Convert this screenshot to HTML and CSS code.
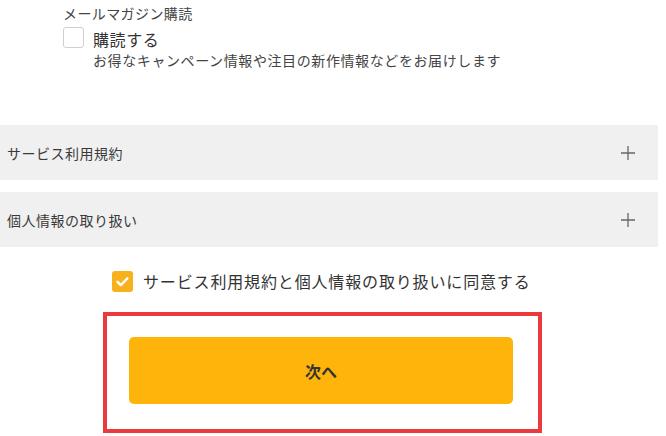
FILE: index.html
```html
<!DOCTYPE html>
<html lang="ja">
<head>
<meta charset="utf-8">
<link rel="stylesheet" href="styles.css">
</head>
<body>
<div class="page">
  <section class="mail">
    <div class="mail-title">メールマガジン購読</div>
    <div class="opt">
      <span class="box"></span>
      <div class="opt-text">
        <div class="opt-label">購読する</div>
        <div class="opt-sub">お得なキャンペーン情報や注目の新作情報などをお届けします</div>
      </div>
    </div>
  </section>

  <div class="panels">
    <div class="panel">
      <span class="panel-title">サービス利用規約</span>
      <svg class="plus" width="16" height="16" viewBox="0 0 16 16"><path d="M8 1v14M1 8h14" stroke="#666" stroke-width="1.3" fill="none"/></svg>
    </div>
    <div class="panel">
      <span class="panel-title">個人情報の取り扱い</span>
      <svg class="plus" width="16" height="16" viewBox="0 0 16 16"><path d="M8 1v14M1 8h14" stroke="#666" stroke-width="1.3" fill="none"/></svg>
    </div>
  </div>

  <div class="agree">
    <span class="box checked">
      <svg width="21" height="21" viewBox="0 0 21 21"><path d="M5.5 10.8l3.3 3.3 6.6-6.8" stroke="#fff" stroke-width="2.4" fill="none" stroke-linecap="round" stroke-linejoin="round"/></svg>
    </span>
    <span class="agree-text">サービス利用規約と個人情報の取り扱いに同意する</span>
  </div>

  <div class="frame">
    <button class="next">次へ</button>
  </div>
</div>
</body>
</html>
```

FILE: styles.css
```css
html, body {
  margin: 0;
  padding: 0;
  background: #fff;
}
body {
  font-family: "Noto Sans CJK JP", "Noto Sans", sans-serif;
  color: #333;
}
.page {
  width: 666px;
  height: 436px;
  overflow: hidden;
}
.mail {
  padding: 3px 0 0 63px;
}
.mail-title {
  font-size: 14px;
  line-height: 20px;
  letter-spacing: 0.4px;
  color: #444;
}
.opt {
  display: flex;
  gap: 9px;
  margin-top: 4px;
}
.box {
  flex: none;
  width: 21px;
  height: 21px;
  box-sizing: border-box;
  border: 1px solid #cfcfcf;
  border-radius: 3px;
  background: #fff;
}
.opt-label {
  font-size: 16px;
  line-height: 24px;
  letter-spacing: 0.6px;
  color: #333;
}
.opt-sub {
  font-size: 14px;
  line-height: 18px;
  letter-spacing: 0.6px;
  color: #444;
}
.panels {
  margin-top: 56px;
  width: 658px;
  display: flex;
  flex-direction: column;
  gap: 12px;
}
.panel {
  height: 55px;
  background: #f0f0f0;
  display: flex;
  align-items: center;
  justify-content: space-between;
  padding: 0 22px 0 7px;
}
.panel-title {
  font-size: 14px;
  letter-spacing: 0.5px;
  color: #3a3a3a;
}
.agree {
  display: flex;
  align-items: center;
  gap: 10px;
  margin: 24px 0 0 112px;
}
.box.checked {
  border: none;
  background: #f7b11c;
  display: flex;
}
.agree-text {
  font-size: 16px;
  line-height: 21px;
  letter-spacing: 0.85px;
  color: #333;
}
.frame {
  margin: 20px 0 0 103px;
  width: 439px;
  height: 121px;
  box-sizing: border-box;
  border: 4px solid #ea3a3c;
  padding: 21px 0 0 22px;
}
.next {
  display: block;
  width: 384px;
  height: 67px;
  border: none;
  border-radius: 5px;
  background: #ffb40c;
  font-family: "Noto Sans CJK JP", "Noto Sans", sans-serif;
  font-size: 16px;
  font-weight: 700;
  color: #333;
  padding: 0;
}
```
